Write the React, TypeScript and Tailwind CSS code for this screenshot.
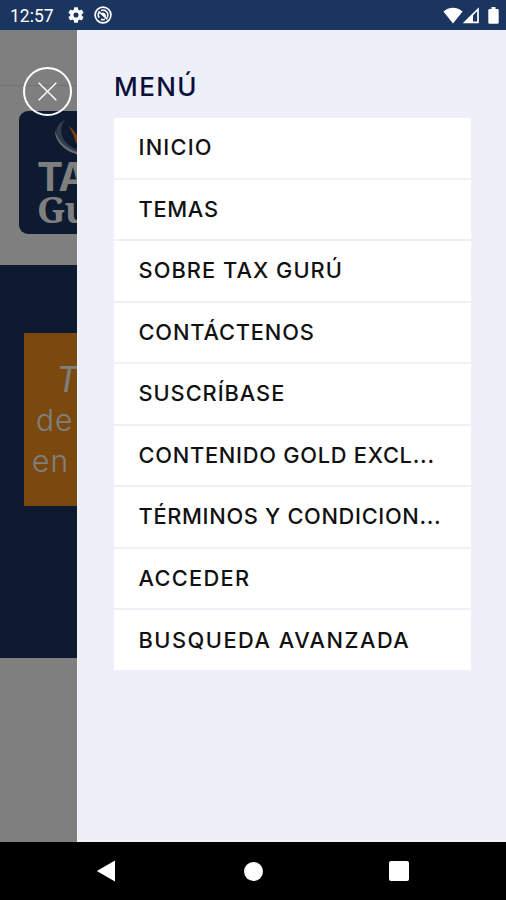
const HEADING_FONT = 'Inter, "Noto Sans", sans-serif';

const MENU_ITEMS = [
  { label: "INICIO", spacing: "tracking-[1.2px]" },
  { label: "TEMAS", spacing: "tracking-[0.7px]" },
  { label: "SOBRE TAX GURÚ", spacing: "tracking-[1.05px]" },
  { label: "CONTÁCTENOS", spacing: "tracking-[0.85px]" },
  { label: "SUSCRÍBASE", spacing: "tracking-[0.95px]" },
  { label: "CONTENIDO GOLD EXCL...", spacing: "tracking-[0.75px]" },
  { label: "TÉRMINOS Y CONDICION...", spacing: "tracking-[0.68px]" },
  { label: "ACCEDER", spacing: "tracking-[1.3px]" },
  { label: "BUSQUEDA AVANZADA", spacing: "tracking-[1.5px]" },
];

function StatusBar() {
  return (
    <header className="flex h-[30px] shrink-0 items-center bg-[#1b3561] pl-[10px] pr-[7px] text-white">
      <span className="w-[58px] pt-px font-[Roboto] text-[17.5px] leading-[30px]">12:57</span>
      <svg width="16" height="16" viewBox="2 2 20 20" fill="currentColor">
        <path d="M19.14 12.94c.04-.3.06-.61.06-.94 0-.32-.02-.64-.07-.94l2.03-1.58a.49.49 0 0 0 .12-.61l-1.92-3.32a.49.49 0 0 0-.59-.22l-2.39.96c-.5-.38-1.03-.7-1.62-.94l-.36-2.54a.48.48 0 0 0-.48-.41h-3.84c-.24 0-.43.17-.47.41l-.36 2.54c-.59.24-1.13.57-1.62.94l-2.39-.96a.48.48 0 0 0-.59.22L2.74 8.87c-.12.21-.08.47.12.61l2.03 1.58c-.05.3-.09.63-.09.94s.02.64.07.94l-2.03 1.58a.49.49 0 0 0-.12.61l1.92 3.32c.12.22.37.29.59.22l2.39-.96c.5.38 1.03.7 1.62.94l.36 2.54c.05.24.24.41.48.41h3.84c.24 0 .44-.17.47-.41l.36-2.54c.59-.24 1.13-.56 1.62-.94l2.39.96c.22.08.47 0 .59-.22l1.92-3.32a.49.49 0 0 0-.12-.61l-2.01-1.58zM12 15.2a3.2 3.2 0 1 1 0-6.4 3.2 3.2 0 0 1 0 6.4z" />
      </svg>
      <svg className="ml-[10px]" width="18" height="18" viewBox="0 0 18 18" fill="none" stroke="currentColor">
        <circle cx="9" cy="9" r="7.9" strokeWidth="1.7" />
        <path d="M5.2 11.8A4.7 4.7 0 0 1 5.2 6.2M7 4.7A4.7 4.7 0 0 1 12.8 11.8M10.8 13.3A4.7 4.7 0 0 1 7 13.2" strokeWidth="1.5" />
        <path d="M4.6 5.2L13.4 13.4" strokeWidth="1.5" />
        <path d="M7.2 7.6A2.6 2.6 0 0 1 11.2 10.8Z" fill="currentColor" strokeWidth="0.8" />
      </svg>
      <div className="ml-auto flex items-center">
        <svg width="20" height="17" viewBox="0 0 20 17" fill="currentColor">
          <path d="M.4 4.6C3 2.2 6.3 .8 10 .8s7 1.4 9.6 3.8L10 16.4z" />
        </svg>
        <svg className="-ml-px mr-px" width="18" height="17" viewBox="0 0 18 17">
          <path d="M2.8 15.4L16 2.2v13.2z" fill="none" stroke="currentColor" strokeWidth="1.7" />
          <path d="M2 15.8L11 6.5v9.3z" fill="currentColor" />
        </svg>
        <svg className="ml-[7px]" width="11" height="17" viewBox="0 0 11 17" fill="currentColor">
          <path d="M3.5 0h4v2h2a1.2 1.2 0 0 1 1.2 1.2v12.300a1.2 1.2 0 0 1-1.2 1.2h-8a1.2 1.2 0 0 1-1.2-1.2V3.2A1.2 1.2 0 0 1 1.5 2h2z" />
        </svg>
      </div>
    </header>
  );
}

function Logo() {
  return (
    <div className="ml-[19px] mt-[25px] h-[123px] w-[160px] rounded-[9px] bg-[#1a3560] pl-[18px]">
      <svg className="ml-[16px] block" width="60" height="49" viewBox="0 0 60 49" fill="none">
        <path d="M12 9C4 12 1 20 5 28C9 37 17 42 28 43L28 40C18 37 10 31 8.5 23C7.5 17 9 13 12 9z" fill="#66779a" />
        <path d="M2 19C2 30 10 40 26 44L26 41.5C13 38 5 31 2 19z" fill="#d4dbe8" />
        <path d="M15.5 15C19.5 17.5 23 22 26 28L26 35L22.5 31C21.5 25 18.5 20 15.5 15z" fill="#ee7c1c" />
      </svg>
      <div
        className="whitespace-nowrap text-[39px] font-bold leading-[34px] text-white"
        style={{ fontFamily: HEADING_FONT }}
      >
        <span className="-tracking-[1px]">TA</span>
      </div>
      <div className="whitespace-nowrap font-['Noto_Serif','Liberation_Serif'] text-[37px] font-bold leading-[30px] text-white">
        <span className="-tracking-[1px]">Gu</span>
      </div>
    </div>
  );
}

function PageBehind() {
  return (
    <div className="relative w-[77px] shrink-0 overflow-hidden bg-white">
      <div className="h-[235px]">
        <div className="h-[56px] border-b border-[#e4e4e4]" />
        <Logo />
      </div>
      <div className="h-[393px] bg-[#1b3461] pt-[68px]">
        <div
          className="ml-6 h-[173px] w-[300px] whitespace-nowrap bg-[#f7921d] pt-[25px] text-white"
          style={{ fontFamily: HEADING_FONT }}
        >
          <p className="pl-[32px] text-[35px] italic leading-[42px]">T</p>
          <p className="pl-[12px] text-[30px] font-light leading-[41px] tracking-[1px]">de</p>
          <p className="pl-[8px] text-[30px] font-light leading-[40px] tracking-[1px]">en</p>
        </div>
      </div>
      <div className="absolute inset-0 bg-black/50" />
      <button
        type="button"
        aria-label="Cerrar"
        className="absolute left-[23px] top-[37px] flex size-[49px] items-center justify-center rounded-full border-2 border-white text-white"
      >
        <svg width="19" height="19" viewBox="0 0 19 19" stroke="currentColor" strokeWidth="1.4">
          <path d="M.7.7l17.6 17.6M18.3.7L.7 18.3" />
        </svg>
      </button>
    </div>
  );
}

function Drawer() {
  return (
    <aside
      className="flex-1 border-b-2 border-l border-[#f3f4f8] bg-[#edf0f9] pl-[36px] pr-[35px]"
      style={{ fontFamily: HEADING_FONT }}
    >
      <h2 className="mt-[37px] h-[51px] text-[26px] font-medium leading-[40px] tracking-[1.4px] text-[#0c1038]">MENÚ</h2>
      <ul className="bg-white">
        {MENU_ITEMS.map((item) => (
          <li
            key={item.label}
            className="flex h-[61.5px] items-center whitespace-nowrap border-b-2 border-[#eef0f5] pl-[24.5px] text-[21.8px] font-medium text-[#111] last:h-[60px] last:border-b-0"
          >
            <span className={item.spacing}>{item.label}</span>
          </li>
        ))}
      </ul>
    </aside>
  );
}

function NavBar() {
  return (
    <nav className="flex h-[58px] shrink-0 items-center bg-black pl-[96px] text-white">
      <svg width="20" height="22" viewBox="0 0 20 22" fill="currentColor">
        <path d="M.8 11L19 .5v21z" />
      </svg>
      <div className="ml-[128px] size-[19px] rounded-full bg-white" />
      <div className="ml-[126px] size-[20px] rounded-[2px] bg-white" />
    </nav>
  );
}

export default function App() {
  return (
    <main className="flex h-[900px] w-[506px] flex-col overflow-hidden">
      <StatusBar />
      <div className="flex min-h-0 flex-1">
        <PageBehind />
        <Drawer />
      </div>
      <NavBar />
    </main>
  );
}
